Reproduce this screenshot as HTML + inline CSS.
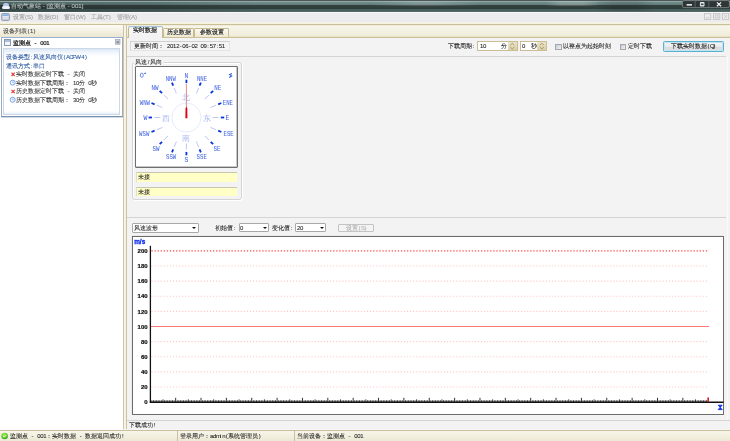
<!DOCTYPE html>
<html><head><meta charset="utf-8">
<style>
*{box-sizing:border-box;margin:0;padding:0}
html,body{width:730px;height:441px;overflow:hidden;background:#f3f3f3;font-family:"Liberation Sans",sans-serif;position:relative}
.a{position:absolute;}
.t{position:absolute;will-change:transform;white-space:nowrap;font-size:6.1px;line-height:8px;color:#303030;-webkit-text-stroke:0.07px currentColor}
.t i{display:inline-block;width:3.05px;text-align:center;font-style:normal;font-size:6px}
#title{left:0;top:0;width:730px;height:12px;background:linear-gradient(#4e5656 0,#4e5656 0.8px,#98b0ae 1px,#8aa4a2 1.8px,#6e8a88 2.4px,#68827f 4.4px,#34423f 5.4px,#2f3d3b 8.6px,#46605e 9.4px,#48605e 11.2px,#6a7474 12px);}
#tdark{left:0;top:1.6px;width:260px;height:10px;background:linear-gradient(90deg,rgba(20,30,30,.3),rgba(20,30,30,.2) 60%,rgba(20,30,30,0));}
.glare{position:absolute;top:1.4px;height:4.6px;}
#menu{left:0;top:12px;width:730px;height:9.8px;background:linear-gradient(#f8f8f8 0,#f8f8f8 1px,#ececee 1.5px,#ececee 100%);}
#band{left:0;top:21.8px;width:730px;height:3.5px;background:linear-gradient(#f6f4e6 0,#f3f0dc 2px,#c9bf98 2.3px,#c9bf98 3.1px,#f3f1e2 3.5px);}
#left{left:0;top:25px;width:124px;height:405px;background:#fff;}
#lhead{left:0;top:25px;width:124px;height:11.5px;background:linear-gradient(#fdfcf6,#ebe6d0);}
#lborder{left:123.2px;top:25px;width:1.3px;height:405px;background:#d0c5a0;}
#gap{left:124.5px;top:25px;width:1.5px;height:405px;background:#f4f2e4;}
#rborder{left:126px;top:25px;width:1.4px;height:405px;background:#cfc39a;}
#tabstrip{left:127.4px;top:25px;width:602.6px;height:11.6px;background:linear-gradient(#ebe6d0 0,#f8f6ea 1.3px,#f3f1e2 50%,#f1eedc 85%,#e6dfc4 100%);}
#page{left:127.4px;top:36.5px;width:602.6px;height:393.5px;background:#f3f3f3;border-top:1px solid #cbbf97;}
#status{left:0;top:429.6px;width:730px;height:11.4px;background:linear-gradient(#f8f6ea,#ece8d4);border-top:1px solid #c8bf9e;box-shadow:0 -0.8px 0 #f8f8fc;}
.sep{position:absolute;height:1.5px;background:linear-gradient(#d4d4d4 0,#d4d4d4 1px,#fff 1px);}
.tab{position:absolute;border:1px solid #c7bb92;border-bottom:none;background:linear-gradient(#fbfaf2,#eee8d0);border-radius:1.5px 1.5px 0 0;}
.combo{position:absolute;background:#fff;border:1px solid #a8a8a8;border-radius:1px;}
.arrow{position:absolute;width:0;height:0;border-left:2px solid transparent;border-right:2px solid transparent;border-top:2.2px solid #111;}
.yel{position:absolute;background:#ffffc6;border-top:1px solid #c8c8b0;border-left:1px solid #e0e0c8;}
.spin{position:absolute;background:#fff;border:1px solid #c9bd95;}
.spbtn{position:absolute;background:linear-gradient(#ebe4c8,#d8cfa8);}
.chk{position:absolute;width:6.3px;height:6px;border:1px solid #a4a8ae;background:linear-gradient(135deg,#c6cad2,#f2f3f6);}
svg{position:absolute;left:0;top:0;}
</style></head><body>
<div class="a" id="title"></div>
<div class="a" id="tdark"></div>
<div class="glare" style="left:370px;width:110px;background:linear-gradient(90deg,rgba(255,255,255,0),rgba(255,255,255,.14) 40%,rgba(255,255,255,.14) 60%,rgba(255,255,255,0))"></div>
<div class="glare" style="left:545px;width:55px;background:linear-gradient(90deg,rgba(255,255,255,0),rgba(255,255,255,.18) 30%,rgba(255,255,255,.18) 70%,rgba(255,255,255,0))"></div>
<div class="a" style="left:595px;top:1.4px;width:60px;height:10px;background:linear-gradient(90deg,rgba(0,0,0,0),rgba(0,0,0,.12) 30%,rgba(0,0,0,.12) 70%,rgba(0,0,0,0))"></div>
<div class="a" style="left:1.5px;top:2px;width:8px;height:7px;">
 <div class="a" style="left:1.5px;top:0.5px;width:5.5px;height:4px;border-radius:50%;background:#b8c8ec"></div>
 <div class="a" style="left:0;top:3.5px;width:8px;height:3.5px;border-radius:2px;background:#eef2fa"></div>
</div>
<div class="t" style="left:11px;top:1.50px;color:#b4bebe;-webkit-text-stroke:0.12px currentColor">自动气象站 - [监测点 - 001]</div>

<svg width="730" height="441">
<rect x="682.4" y="0.6" width="47" height="7" rx="1.6" fill="#2e3535" stroke="#8c9696" stroke-width="0.7"/>
<path d="M695.1 0.8V7.4M708.8 0.8V7.4" stroke="#6c7676" stroke-width="0.7"/>
<rect x="686.6" y="4.1" width="5.4" height="1.5" fill="#f4f4f4"/>
<rect x="699.9" y="2.1" width="4.6" height="4.4" rx="0.9" fill="#e6ecee"/>
<rect x="700.9" y="3.5" width="2.6" height="1.6" fill="#3c4444"/>
<path d="M716.9 2.4L721.1 6.3M721.1 2.4L716.9 6.3" stroke="#fafafa" stroke-width="1.2"/>
</svg>
<div class="a" id="menu"></div>
<svg width="730" height="441"><rect x="1.6" y="13.5" width="7.9" height="7" rx="1.3" fill="#c4ccd8" stroke="#8e9cb0" stroke-width="0.9"/><rect x="2.6" y="14.4" width="5.9" height="1.6" fill="#88b2e2"/><rect x="2.6" y="16.3" width="5.9" height="1" fill="#f4f6fa"/><rect x="2.6" y="17.8" width="5.9" height="0.9" fill="#e8ecf2"/></svg>
<div class="t" style="left:13px;top:13.10px;color:#a4a4a4;-webkit-text-stroke:0.1px currentColor">设置(S)</div>
<div class="t" style="left:38px;top:13.10px;color:#a4a4a4;-webkit-text-stroke:0.1px currentColor">数据(D)</div>
<div class="t" style="left:64px;top:13.10px;color:#a4a4a4;-webkit-text-stroke:0.1px currentColor">窗口(W)</div>
<div class="t" style="left:91px;top:13.10px;color:#a4a4a4;-webkit-text-stroke:0.1px currentColor">工具(T)</div>
<div class="t" style="left:117px;top:13.10px;color:#a4a4a4;-webkit-text-stroke:0.1px currentColor">管理(A)</div>

<svg width="730" height="441">
<g fill="none" stroke="#c6c6c6" stroke-width="0.9">
<rect x="704.4" y="13.5" width="6.3" height="5.9"/><rect x="713.5" y="13.5" width="6.3" height="5.9"/><rect x="722.4" y="13.5" width="6.3" height="5.9"/>
<path d="M706 17.8h3" /><rect x="715.3" y="15" width="2.8" height="2.8"/><path d="M724.2 15.1l2.8 2.8M727 15.1l-2.8 2.8"/>
</g></svg>
<div class="a" id="band"></div>
<div class="a" id="left"></div>
<div class="a" id="lhead"></div>
<div class="t" style="left:3px;top:27.30px;color:#404040;">设备列表<i>(</i><i>1</i><i>)</i></div>

<div class="a" style="left:1.0px;top:36.8px;width:121.6px;height:80.6px;border:1px solid #9aaac0;border-top-color:#98b0d4;border-bottom:1.3px solid #7890b0;background:#fff;box-shadow:0 0.8px 0 #c8d4e4"></div>
<div class="a" style="left:3.6px;top:39.4px;width:7.6px;height:6.2px;border:1px solid #8898b0;background:linear-gradient(#a8c0e0 0,#a8c0e0 1.6px,#f4f6fa 1.6px);"></div>
<div class="t" style="left:13px;top:39.10px;color:#1a1a1a;-webkit-text-stroke:0.22px currentColor">监测点<i>&#160;</i><i>-</i><i>&#160;</i><i>0</i><i>0</i><i>1</i></div>

<svg width="730" height="441"><rect x="115.6" y="39.6" width="4.4" height="4.6" fill="#c8ccd4" stroke="#9aa4b4" stroke-width="0.7"/><rect x="116.6" y="41.2" width="2.4" height="2" fill="#8a8e96"/></svg>
<div class="a" style="left:2.8px;top:47.6px;width:117.3px;height:67.6px;border:1px solid #ccd8e8;background:linear-gradient(#dce8f6 0,#f4f8fc 4px,#fff 8px,#fff 62px,#e8eff8 100%);"></div>
<div class="t" style="left:6.3px;top:53.20px;color:#2a58a0;">设备类型<i>:</i>风速风向仪<i>(</i><i>A</i><i>C</i><i>F</i><i>W</i><i>-</i><i>4</i><i>)</i></div>
<div class="t" style="left:6.3px;top:61.75px;color:#2a58a0;">通讯方式<i>:</i>串口</div>
<svg width="730" height="441"><path d="M11.5 72.70L14.7 76.00M14.7 72.70L11.5 76.00" stroke="#e03434" stroke-width="1.1"/></svg>
<div class="t" style="left:15.9px;top:70.30px;color:#303030;">实时数据定时下载<i>&#160;</i><i>-</i><i>&#160;</i>关闭</div>
<svg width="730" height="441"><circle cx="12.7" cy="82.65" r="2.5" fill="#f4f8ff" stroke="#6a98e8" stroke-width="0.9"/><path d="M12.7 81.25V82.65H14" stroke="#6a98e8" stroke-width="0.6" fill="none"/></svg>
<div class="t" style="left:15.9px;top:78.85px;color:#303030;">实时数据下载周期：<i>&#160;</i><i>1</i><i>0</i>分<i>&#160;</i><i>0</i>秒</div>
<svg width="730" height="441"><path d="M11.5 89.80L14.7 93.10M14.7 89.80L11.5 93.10" stroke="#e03434" stroke-width="1.1"/></svg>
<div class="t" style="left:15.9px;top:87.40px;color:#303030;">历史数据定时下载<i>&#160;</i><i>-</i><i>&#160;</i>关闭</div>
<svg width="730" height="441"><circle cx="12.7" cy="99.75" r="2.5" fill="#f4f8ff" stroke="#6a98e8" stroke-width="0.9"/><path d="M12.7 98.35V99.75H14" stroke="#6a98e8" stroke-width="0.6" fill="none"/></svg>
<div class="t" style="left:15.9px;top:95.95px;color:#303030;">历史数据下载周期：<i>&#160;</i><i>3</i><i>0</i>分<i>&#160;</i><i>0</i>秒</div>

<div class="a" id="lborder"></div>
<div class="a" id="gap"></div>
<div class="a" id="rborder"></div>
<div class="a" id="tabstrip"></div>
<div class="a" id="page"></div>
<div class="tab" style="left:163px;top:27.9px;width:31.2px;height:8.8px"></div>
<div class="tab" style="left:194px;top:27.9px;width:34.5px;height:8.8px"></div>
<div class="tab" style="left:128px;top:25.9px;width:35.2px;height:12.4px;background:linear-gradient(#fcfcfc,#f3f3f3 70%);border-color:#c4b98f;border-top-color:#a8c4dc;box-shadow:inset 0 0.8px 0 #d8ecf8"></div>
<div class="t" style="left:166.9px;top:28.40px;color:#202020;-webkit-text-stroke:0.15px currentColor">历史数据</div>
<div class="t" style="left:200.3px;top:28.40px;color:#202020;-webkit-text-stroke:0.15px currentColor">参数设置</div>
<div class="t" style="left:133.2px;top:25.90px;color:#181818;-webkit-text-stroke:0.18px currentColor">实时数据</div>
<div class="a" style="left:130px;top:41px;width:100px;height:10px;border:1px solid #e4e4e4;border-top-color:#d0d0d0;border-left-color:#d8d8d8;background:#f4f4f4"></div>
<div class="t" style="left:134px;top:42.00px;color:#202020;">更新时间：</div>
<div class="t" style="left:166.9px;top:42.00px;color:#202020;"><i>2</i><i>0</i><i>1</i><i>2</i><i>-</i><i>0</i><i>6</i><i>-</i><i>0</i><i>2</i><i>&#160;</i><i>0</i><i>9</i><i>:</i><i>5</i><i>7</i><i>:</i><i>5</i><i>1</i></div>
<div class="t" style="left:447.5px;top:42.10px;color:#202020;">下载周期<i>:</i></div>

<div class="spin" style="left:477px;top:40.8px;width:40.8px;height:10.2px"></div>
<div class="spbtn" style="left:507.8px;top:41.8px;width:9px;height:8.2px"></div>
<div class="spin" style="left:520px;top:40.8px;width:27.4px;height:10.2px"></div>
<div class="spbtn" style="left:537.4px;top:41.8px;width:9px;height:8.2px"></div>
<svg width="730" height="441"><path d="M510.3 45.1l2-1.8l2 1.8M510.3 47.1l2 1.8l2-1.8M539.9 45.1l2-1.8l2 1.8M539.9 47.1l2 1.8l2-1.8" stroke="#a89a68" stroke-width="1" fill="none"/></svg>
<div class="t" style="left:479.5px;top:42.10px;color:#202020;"><i>1</i><i>0</i></div>
<div class="t" style="left:501px;top:42.10px;color:#202020;">分</div>
<div class="t" style="left:522px;top:42.10px;color:#202020;"><i>0</i></div>
<div class="t" style="left:530.5px;top:42.10px;color:#202020;">秒</div>
<div class="chk" style="left:555.3px;top:43.7px"></div>
<div class="chk" style="left:620px;top:43.7px"></div>
<div class="t" style="left:563.3px;top:42.10px;color:#202020;">以整点为起始时刻</div>
<div class="t" style="left:628px;top:42.10px;color:#202020;">定时下载</div>
<div class="a" style="left:662.9px;top:40.5px;width:60.9px;height:11.6px;border:1px solid #5eb0d0;border-radius:1.5px;background:linear-gradient(#f4f6f8 0,#e8eaec 50%,#d8dadc 51%,#e0e2e4 100%);box-shadow:inset 0 0 0 1px #c0e4f2"></div>
<div class="t" style="left:670.5px;top:42.20px;color:#111111;">下载实时数据<i>(</i><i>Q</i><i>)</i></div>

<div class="sep" style="left:127.4px;top:55.8px;width:599px"></div>
<div class="a" style="left:131.5px;top:62.2px;width:110.5px;height:138px;border:1px solid #d4d4d4;border-radius:3px;box-shadow:inset 1px 1px 0 #fff,1px 1px 0 #fff"></div>
<div class="a" style="left:134px;top:58px;width:30px;height:6px;background:#f3f3f3"></div>
<div class="t" style="left:135px;top:57.90px;color:#303030;">风速<i>/</i>风向</div>

<div class="a" style="left:134.7px;top:66.2px;width:103px;height:101.4px;background:#fff;border:1.5px solid #6e6e6e;border-radius:1px;box-shadow:inset -1px -1px 0 #c8c8c8"></div>
<div class="yel" style="left:135.6px;top:172.3px;width:101px;height:9.6px"></div>
<div class="yel" style="left:135.6px;top:186.9px;width:101px;height:9.6px"></div>
<div class="t" style="left:137.8px;top:173.20px;color:#202020;">未接</div>
<div class="t" style="left:137.8px;top:187.90px;color:#202020;">未接</div>

<div class="sep" style="left:127.4px;top:216.9px;width:599px"></div>
<div class="combo" style="left:132px;top:222.5px;width:66.7px;height:10.1px"></div>
<div class="arrow" style="left:192px;top:227px"></div>
<div class="combo" style="left:238.5px;top:222.8px;width:30.2px;height:9.6px"></div>
<div class="arrow" style="left:262.5px;top:227px"></div>
<div class="combo" style="left:295.3px;top:222.8px;width:30.7px;height:9.6px"></div>
<div class="arrow" style="left:319.5px;top:227px"></div>
<div class="a" style="left:337.7px;top:223.6px;width:36.2px;height:8.6px;border:1px solid #c4c4c4;border-radius:1px;background:#f4f4f4"></div>
<div class="t" style="left:133.8px;top:223.80px;color:#202020;">风速波形</div>
<div class="t" style="left:215.3px;top:223.80px;color:#202020;">初始值<i>:</i></div>
<div class="t" style="left:239.8px;top:223.80px;color:#202020;"><i>0</i></div>
<div class="t" style="left:272.3px;top:223.80px;color:#202020;">变化值<i>:</i></div>
<div class="t" style="left:296.6px;top:223.80px;color:#202020;"><i>2</i><i>0</i></div>
<div class="t" style="left:345.5px;top:224.00px;color:#b4b4b4;-webkit-text-stroke:0.1px currentColor">设置<i>(</i><i>S</i><i>)</i></div>

<div class="a" style="left:132.2px;top:235.6px;width:591.8px;height:179.7px;background:#fff;border:1.7px solid #6c6c6c;box-shadow:-0.8px -0.8px 0 #e8e8e8"></div>
<div class="a" style="left:727px;top:57px;width:1px;height:362px;background:#fafafa"></div>
<svg width="730" height="441" style="font-family:'Liberation Sans',sans-serif">
<g font-size="6" font-weight="bold" fill="#111" stroke="#111" stroke-width="0.2">
<line x1="151.4" y1="386.98" x2="709" y2="386.98" stroke="#ffc8c8" stroke-width="1.05" stroke-dasharray="1.1 1.98"/>
<text x="147.6" y="389.18" text-anchor="end">20</text>
<line x1="151.4" y1="371.86" x2="709" y2="371.86" stroke="#ffc8c8" stroke-width="1.05" stroke-dasharray="1.1 1.98"/>
<text x="147.6" y="374.06" text-anchor="end">40</text>
<line x1="151.4" y1="356.74" x2="709" y2="356.74" stroke="#ffc8c8" stroke-width="1.05" stroke-dasharray="1.1 1.98"/>
<text x="147.6" y="358.94" text-anchor="end">60</text>
<line x1="151.4" y1="341.62" x2="709" y2="341.62" stroke="#ffc8c8" stroke-width="1.05" stroke-dasharray="1.1 1.98"/>
<text x="147.6" y="343.82" text-anchor="end">80</text>
<line x1="150.8" y1="326.50" x2="709" y2="326.50" stroke="#ff7676" stroke-width="1.1"/>
<text x="147.6" y="328.70" text-anchor="end">100</text>
<line x1="151.4" y1="311.38" x2="709" y2="311.38" stroke="#ffc8c8" stroke-width="1.05" stroke-dasharray="1.1 1.98"/>
<text x="147.6" y="313.58" text-anchor="end">120</text>
<line x1="151.4" y1="296.26" x2="709" y2="296.26" stroke="#ffc8c8" stroke-width="1.05" stroke-dasharray="1.1 1.98"/>
<text x="147.6" y="298.46" text-anchor="end">140</text>
<line x1="151.4" y1="281.14" x2="709" y2="281.14" stroke="#ffc8c8" stroke-width="1.05" stroke-dasharray="1.1 1.98"/>
<text x="147.6" y="283.34" text-anchor="end">160</text>
<line x1="151.4" y1="266.02" x2="709" y2="266.02" stroke="#ffc8c8" stroke-width="1.05" stroke-dasharray="1.1 1.98"/>
<text x="147.6" y="268.22" text-anchor="end">180</text>
<line x1="151.4" y1="250.90" x2="709" y2="250.90" stroke="#ff4c4c" stroke-width="1.25" stroke-dasharray="1.3 1.78"/>
<text x="147.6" y="253.10" text-anchor="end">200</text>
<text x="147.6" y="404.30" text-anchor="end">0</text>
<line x1="150.4" y1="245.8" x2="150.4" y2="402.6" stroke="#111" stroke-width="1.3"/>
<line x1="149.8" y1="402.2" x2="723.5" y2="402.2" stroke="#111" stroke-width="1.4"/>
<path d="M151.89 402V400.30M153.47 402V400.30M155.06 402V400.30M156.64 402V400.30M158.23 402V400.30M159.81 402V400.30M161.40 402V400.30M162.98 402V399.40M164.56 402V400.30M166.15 402V400.30M167.74 402V400.30M169.32 402V400.30M170.91 402V400.30M172.49 402V400.30M174.08 402V400.30M175.66 402V397.80M177.25 402V400.30M178.83 402V400.30M180.42 402V400.30M182.00 402V400.30M183.59 402V400.30M185.17 402V400.30M186.75 402V400.30M188.34 402V399.40M189.93 402V400.30M191.51 402V400.30M193.10 402V400.30M194.68 402V400.30M196.27 402V400.30M197.85 402V400.30M199.44 402V400.30M201.02 402V397.80M202.61 402V400.30M204.19 402V400.30M205.78 402V400.30M207.36 402V400.30M208.94 402V400.30M210.53 402V400.30M212.12 402V400.30M213.70 402V399.40M215.29 402V400.30M216.87 402V400.30M218.46 402V400.30M220.04 402V400.30M221.62 402V400.30M223.21 402V400.30M224.80 402V400.30M226.38 402V397.80M227.97 402V400.30M229.55 402V400.30M231.13 402V400.30M232.72 402V400.30M234.31 402V400.30M235.89 402V400.30M237.48 402V400.30M239.06 402V399.40M240.65 402V400.30M242.23 402V400.30M243.81 402V400.30M245.40 402V400.30M246.99 402V400.30M248.57 402V400.30M250.16 402V400.30M251.74 402V397.80M253.32 402V400.30M254.91 402V400.30M256.50 402V400.30M258.08 402V400.30M259.67 402V400.30M261.25 402V400.30M262.84 402V400.30M264.42 402V399.40M266.00 402V400.30M267.59 402V400.30M269.18 402V400.30M270.76 402V400.30M272.35 402V400.30M273.93 402V400.30M275.51 402V400.30M277.10 402V397.80M278.69 402V400.30M280.27 402V400.30M281.86 402V400.30M283.44 402V400.30M285.02 402V400.30M286.61 402V400.30M288.20 402V400.30M289.78 402V399.40M291.37 402V400.30M292.95 402V400.30M294.53 402V400.30M296.12 402V400.30M297.71 402V400.30M299.29 402V400.30M300.88 402V400.30M302.46 402V397.80M304.05 402V400.30M305.63 402V400.30M307.22 402V400.30M308.80 402V400.30M310.38 402V400.30M311.97 402V400.30M313.56 402V400.30M315.14 402V399.40M316.73 402V400.30M318.31 402V400.30M319.89 402V400.30M321.48 402V400.30M323.06 402V400.30M324.65 402V400.30M326.24 402V400.30M327.82 402V397.80M329.40 402V400.30M330.99 402V400.30M332.58 402V400.30M334.16 402V400.30M335.75 402V400.30M337.33 402V400.30M338.92 402V400.30M340.50 402V399.40M342.09 402V400.30M343.67 402V400.30M345.25 402V400.30M346.84 402V400.30M348.43 402V400.30M350.01 402V400.30M351.60 402V400.30M353.18 402V397.80M354.76 402V400.30M356.35 402V400.30M357.94 402V400.30M359.52 402V400.30M361.11 402V400.30M362.69 402V400.30M364.27 402V400.30M365.86 402V399.40M367.44 402V400.30M369.03 402V400.30M370.62 402V400.30M372.20 402V400.30M373.78 402V400.30M375.37 402V400.30M376.96 402V400.30M378.54 402V397.80M380.12 402V400.30M381.71 402V400.30M383.30 402V400.30M384.88 402V400.30M386.47 402V400.30M388.05 402V400.30M389.63 402V400.30M391.22 402V399.40M392.81 402V400.30M394.39 402V400.30M395.98 402V400.30M397.56 402V400.30M399.14 402V400.30M400.73 402V400.30M402.31 402V400.30M403.90 402V397.80M405.49 402V400.30M407.07 402V400.30M408.66 402V400.30M410.24 402V400.30M411.82 402V400.30M413.41 402V400.30M415.00 402V400.30M416.58 402V399.40M418.17 402V400.30M419.75 402V400.30M421.33 402V400.30M422.92 402V400.30M424.50 402V400.30M426.09 402V400.30M427.68 402V400.30M429.26 402V397.80M430.85 402V400.30M432.43 402V400.30M434.01 402V400.30M435.60 402V400.30M437.19 402V400.30M438.77 402V400.30M440.36 402V400.30M441.94 402V399.40M443.52 402V400.30M445.11 402V400.30M446.69 402V400.30M448.28 402V400.30M449.87 402V400.30M451.45 402V400.30M453.04 402V400.30M454.62 402V397.80M456.20 402V400.30M457.79 402V400.30M459.38 402V400.30M460.96 402V400.30M462.55 402V400.30M464.13 402V400.30M465.72 402V400.30M467.30 402V399.40M468.88 402V400.30M470.47 402V400.30M472.06 402V400.30M473.64 402V400.30M475.23 402V400.30M476.81 402V400.30M478.39 402V400.30M479.98 402V397.80M481.56 402V400.30M483.15 402V400.30M484.74 402V400.30M486.32 402V400.30M487.91 402V400.30M489.49 402V400.30M491.07 402V400.30M492.66 402V399.40M494.25 402V400.30M495.83 402V400.30M497.42 402V400.30M499.00 402V400.30M500.58 402V400.30M502.17 402V400.30M503.75 402V400.30M505.34 402V397.80M506.93 402V400.30M508.51 402V400.30M510.10 402V400.30M511.68 402V400.30M513.26 402V400.30M514.85 402V400.30M516.43 402V400.30M518.02 402V399.40M519.61 402V400.30M521.19 402V400.30M522.77 402V400.30M524.36 402V400.30M525.94 402V400.30M527.53 402V400.30M529.12 402V400.30M530.70 402V397.80M532.29 402V400.30M533.87 402V400.30M535.45 402V400.30M537.04 402V400.30M538.62 402V400.30M540.21 402V400.30M541.80 402V400.30M543.38 402V399.40M544.96 402V400.30M546.55 402V400.30M548.13 402V400.30M549.72 402V400.30M551.31 402V400.30M552.89 402V400.30M554.48 402V400.30M556.06 402V397.80M557.64 402V400.30M559.23 402V400.30M560.82 402V400.30M562.40 402V400.30M563.99 402V400.30M565.57 402V400.30M567.15 402V400.30M568.74 402V399.40M570.33 402V400.30M571.91 402V400.30M573.50 402V400.30M575.08 402V400.30M576.66 402V400.30M578.25 402V400.30M579.84 402V400.30M581.42 402V397.80M583.00 402V400.30M584.59 402V400.30M586.17 402V400.30M587.76 402V400.30M589.35 402V400.30M590.93 402V400.30M592.51 402V400.30M594.10 402V399.40M595.68 402V400.30M597.27 402V400.30M598.86 402V400.30M600.44 402V400.30M602.02 402V400.30M603.61 402V400.30M605.19 402V400.30M606.78 402V397.80M608.37 402V400.30M609.95 402V400.30M611.54 402V400.30M613.12 402V400.30M614.70 402V400.30M616.29 402V400.30M617.88 402V400.30M619.46 402V399.40M621.05 402V400.30M622.63 402V400.30M624.21 402V400.30M625.80 402V400.30M627.38 402V400.30M628.97 402V400.30M630.56 402V400.30M632.14 402V397.80M633.73 402V400.30M635.31 402V400.30M636.89 402V400.30M638.48 402V400.30M640.07 402V400.30M641.65 402V400.30M643.24 402V400.30M644.82 402V399.40M646.40 402V400.30M647.99 402V400.30M649.58 402V400.30M651.16 402V400.30M652.75 402V400.30M654.33 402V400.30M655.91 402V400.30M657.50 402V397.80M659.09 402V400.30M660.67 402V400.30M662.25 402V400.30M663.84 402V400.30M665.42 402V400.30M667.01 402V400.30M668.60 402V400.30M670.18 402V399.40M671.77 402V400.30M673.35 402V400.30M674.93 402V400.30M676.52 402V400.30M678.11 402V400.30M679.69 402V400.30M681.28 402V400.30M682.86 402V397.80M684.44 402V400.30M686.03 402V400.30M687.62 402V400.30M689.20 402V400.30M690.79 402V400.30M692.37 402V400.30M693.95 402V400.30M695.54 402V399.40M697.12 402V400.30M698.71 402V400.30M700.30 402V400.30M701.88 402V400.30M703.46 402V400.30M705.05 402V400.30M706.63 402V400.30M708.22 402V397.80" stroke="#111" stroke-width="0.85" fill="none"/>
</g>
<text x="134.2" y="243.8" font-size="6.4" font-weight="bold" fill="#0a2cf0" stroke="#0a2cf0" stroke-width="0.3">m/s</text>
<path d="M708.2 402V397.6" stroke="#f01010" stroke-width="1.3"/>
<path d="M718.2 405.2h4L720.2 407.4L718.2 409.6h4L720.2 407.4Z" stroke="#1030f0" stroke-width="0.9" fill="#1030f0"/>
<g font-size="6.4" font-family="Liberation Mono" fill="#4a6ae0" stroke="#4a6ae0" stroke-width="0.05" text-anchor="middle">
<line x1="186.40" y1="83.10" x2="186.40" y2="79.70" stroke="#0636e0" stroke-width="1.8"/>
<text x="186.40" y="78.30">N</text>
<line x1="196.35" y1="93.48" x2="198.65" y2="87.94" stroke="#b4c2ee" stroke-width="0.9"/>
<line x1="199.56" y1="85.72" x2="200.87" y2="82.58" stroke="#0636e0" stroke-width="1.8"/>
<text x="202.00" y="81.20" textLength="10.2" lengthAdjust="spacingAndGlyphs">NNE</text>
<line x1="204.78" y1="99.12" x2="209.03" y2="94.87" stroke="#b4c2ee" stroke-width="0.9"/>
<line x1="210.72" y1="93.18" x2="213.13" y2="90.77" stroke="#0636e0" stroke-width="1.8"/>
<text x="217.70" y="90.40" textLength="7" lengthAdjust="spacingAndGlyphs">NE</text>
<line x1="210.42" y1="107.55" x2="215.96" y2="105.25" stroke="#b4c2ee" stroke-width="0.9"/>
<line x1="218.18" y1="104.34" x2="221.32" y2="103.03" stroke="#0636e0" stroke-width="1.8"/>
<text x="227.90" y="105.10" textLength="10.2" lengthAdjust="spacingAndGlyphs">ENE</text>
<line x1="212.40" y1="117.50" x2="218.40" y2="117.50" stroke="#b4c2ee" stroke-width="0.9"/>
<line x1="220.80" y1="117.50" x2="224.20" y2="117.50" stroke="#0636e0" stroke-width="1.8"/>
<text x="227.50" y="120.00">E</text>
<line x1="210.42" y1="127.45" x2="215.96" y2="129.75" stroke="#b4c2ee" stroke-width="0.9"/>
<line x1="218.18" y1="130.66" x2="221.32" y2="131.97" stroke="#0636e0" stroke-width="1.8"/>
<text x="228.60" y="135.80" textLength="10.2" lengthAdjust="spacingAndGlyphs">ESE</text>
<line x1="204.78" y1="135.88" x2="209.03" y2="140.13" stroke="#b4c2ee" stroke-width="0.9"/>
<line x1="210.72" y1="141.82" x2="213.13" y2="144.23" stroke="#0636e0" stroke-width="1.8"/>
<text x="216.90" y="150.50" textLength="7" lengthAdjust="spacingAndGlyphs">SE</text>
<line x1="196.35" y1="141.52" x2="198.65" y2="147.06" stroke="#b4c2ee" stroke-width="0.9"/>
<line x1="199.56" y1="149.28" x2="200.87" y2="152.42" stroke="#0636e0" stroke-width="1.8"/>
<text x="201.70" y="159.30" textLength="10.2" lengthAdjust="spacingAndGlyphs">SSE</text>
<line x1="186.40" y1="143.50" x2="186.40" y2="149.50" stroke="#b4c2ee" stroke-width="0.9"/>
<line x1="186.40" y1="151.90" x2="186.40" y2="155.30" stroke="#0636e0" stroke-width="1.8"/>
<text x="186.40" y="161.70">S</text>
<line x1="176.45" y1="141.52" x2="174.15" y2="147.06" stroke="#b4c2ee" stroke-width="0.9"/>
<line x1="173.24" y1="149.28" x2="171.93" y2="152.42" stroke="#0636e0" stroke-width="1.8"/>
<text x="171.10" y="159.30" textLength="10.2" lengthAdjust="spacingAndGlyphs">SSW</text>
<line x1="168.02" y1="135.88" x2="163.77" y2="140.13" stroke="#b4c2ee" stroke-width="0.9"/>
<line x1="162.08" y1="141.82" x2="159.67" y2="144.23" stroke="#0636e0" stroke-width="1.8"/>
<text x="155.90" y="150.50" textLength="7" lengthAdjust="spacingAndGlyphs">SW</text>
<line x1="162.38" y1="127.45" x2="156.84" y2="129.75" stroke="#b4c2ee" stroke-width="0.9"/>
<line x1="154.62" y1="130.66" x2="151.48" y2="131.97" stroke="#0636e0" stroke-width="1.8"/>
<text x="144.20" y="135.80" textLength="10.2" lengthAdjust="spacingAndGlyphs">WSW</text>
<line x1="160.40" y1="117.50" x2="154.40" y2="117.50" stroke="#b4c2ee" stroke-width="0.9"/>
<line x1="152.00" y1="117.50" x2="148.60" y2="117.50" stroke="#0636e0" stroke-width="1.8"/>
<text x="145.30" y="120.00">W</text>
<line x1="162.38" y1="107.55" x2="156.84" y2="105.25" stroke="#b4c2ee" stroke-width="0.9"/>
<line x1="154.62" y1="104.34" x2="151.48" y2="103.03" stroke="#0636e0" stroke-width="1.8"/>
<text x="144.90" y="105.10" textLength="10.2" lengthAdjust="spacingAndGlyphs">WNW</text>
<line x1="168.02" y1="99.12" x2="163.77" y2="94.87" stroke="#b4c2ee" stroke-width="0.9"/>
<line x1="162.08" y1="93.18" x2="159.67" y2="90.77" stroke="#0636e0" stroke-width="1.8"/>
<text x="155.10" y="90.40" textLength="7" lengthAdjust="spacingAndGlyphs">NW</text>
<line x1="176.45" y1="93.48" x2="174.15" y2="87.94" stroke="#b4c2ee" stroke-width="0.9"/>
<line x1="173.24" y1="85.72" x2="171.93" y2="82.58" stroke="#0636e0" stroke-width="1.8"/>
<text x="170.80" y="81.20" textLength="10.2" lengthAdjust="spacingAndGlyphs">NNW</text>
</g>
<circle cx="186.4" cy="117.6" r="14.6" fill="none" stroke="#dfe6fa" stroke-width="0.8"/>
<g font-size="8" fill="#aebcf0" text-anchor="middle">
<text x="186.4" y="100.2">北</text><text x="207" y="120.5">东</text><text x="166" y="120.5">西</text><text x="186.4" y="141">南</text>
</g>
<ellipse cx="141.8" cy="75.2" rx="1.5" ry="2.1" fill="none" stroke="#5a7ce0" stroke-width="0.9"/><rect x="144.3" y="72.8" width="1.6" height="1.1" fill="#2a58d8"/>
<path d="M232 73.4L229.6 74.6L231.7 75.9L229.2 77.5" fill="none" stroke="#3060d8" stroke-width="1.1"/>
<path d="M186.4 84V108" stroke="#dc7070" stroke-width="0.8"/>
<path d="M185.4 118.2L185.5 108.6L186.4 106.8L187.3 108.6L187.4 118.2Z" fill="#e00010"/>
</svg>
<div class="sep" style="left:127.4px;top:419.8px;width:602.6px"></div>
<div class="t" style="left:129.4px;top:421.20px;color:#202020;">下载成功<i>!</i></div>

<div class="a" id="status"></div>
<svg width="730" height="441"><defs><radialGradient id="gg" cx="0.4" cy="0.3" r="0.7"><stop offset="0" stop-color="#a8f040"/><stop offset="1" stop-color="#30a818"/></radialGradient></defs><circle cx="4.6" cy="436" r="3.3" fill="url(#gg)"/><path d="M2.9 435.9L4.3 437.2L6.4 434.8" stroke="#fff" stroke-width="0.9" fill="none"/></svg>
<div class="a" style="left:177px;top:431px;width:1px;height:10px;background:#c8bea0"></div>
<div class="a" style="left:294px;top:431px;width:1px;height:10px;background:#c8bea0"></div>
<div class="t" style="left:9.9px;top:432.20px;color:#202020;">监测点<i>&#160;</i><i>-</i><i>&#160;</i><i>0</i><i>0</i><i>1</i>：实时数据<i>&#160;</i><i>-</i><i>&#160;</i>数据返回成功<i>!</i></div>
<div class="t" style="left:180px;top:432.20px;color:#202020;">登录用户：<i>a</i><i>d</i><i>m</i><i>i</i><i>n</i><i>(</i>系统管理员<i>)</i></div>
<div class="t" style="left:297px;top:432.20px;color:#202020;">当前设备：监测点<i>&#160;</i><i>-</i><i>&#160;</i><i>0</i><i>0</i><i>1</i></div>
</body></html>
